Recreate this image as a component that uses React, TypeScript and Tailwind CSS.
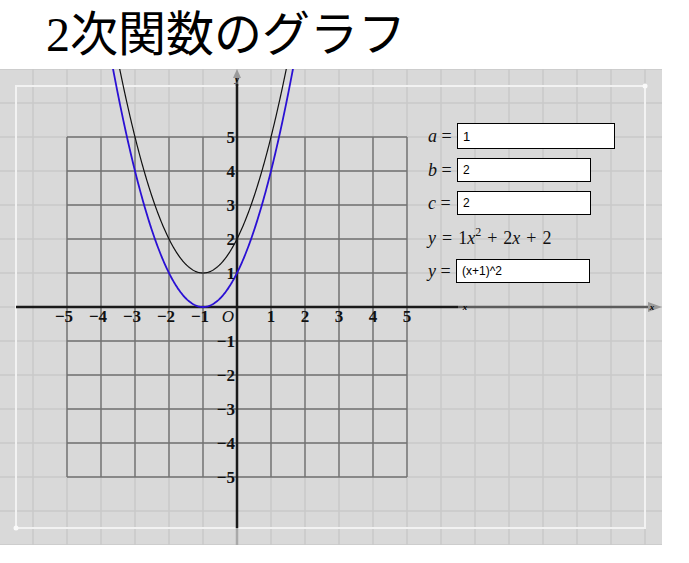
import React from "react";

const W = 662;
const H = 476;
const OX = 237;
const OY = 238;
const U = 34;

const px = (x: number) => OX + x * U;
const py = (y: number) => OY - y * U;

function curve(f: (x: number) => number): string {
  const pts: string[] = [];
  for (let x = -4.2; x <= 2.2; x += 0.02) {
    pts.push(`${px(x).toFixed(2)},${py(f(x)).toFixed(2)}`);
  }
  return "M" + pts.join(" L");
}

const serif = { fontFamily: '"Liberation Serif", "DejaVu Serif", serif' };

function Graph() {
  const lightV: number[] = [];
  for (let x = 33; x <= W; x += U) lightV.push(x);
  const lightH: number[] = [];
  for (let y = 0; y <= H; y += U) lightH.push(y);
  const ticks = [-5, -4, -3, -2, -1, 0, 1, 2, 3, 4, 5];

  return (
    <svg width={W} height={H} className="block">
      <defs>
        <clipPath id="cv">
          <rect x={0} y={0} width={W} height={H} />
        </clipPath>
      </defs>
      <rect x={0} y={0} width={W} height={H} fill="#d9d9d9" />
      {/* light grid */}
      {lightV.map((x) => (
        <line key={"lv" + x} x1={x} y1={0} x2={x} y2={H} stroke="#c9c9c9" strokeWidth={1.5} />
      ))}
      {lightH.map((y) => (
        <line key={"lh" + y} x1={0} y1={y} x2={W} y2={y} stroke="#c9c9c9" strokeWidth={1.5} />
      ))}
      {/* white frame */}
      <rect x={16} y={17} width={629} height={442} fill="none" stroke="#f2f2f2" strokeWidth={2} />
      <circle cx={645} cy={17} r={2.5} fill="#fafafa" />
      <circle cx={16} cy={459} r={2.5} fill="#fafafa" />
      {/* dark grid */}
      {ticks.map((t) => (
        <line key={"dv" + t} x1={px(t)} y1={py(5)} x2={px(t)} y2={py(-5)} stroke="#707070" strokeWidth={1.4} />
      ))}
      {ticks.map((t) => (
        <line key={"dh" + t} x1={px(-5)} y1={py(t)} x2={px(5)} y2={py(t)} stroke="#707070" strokeWidth={1.4} />
      ))}
      {/* axes, outer part */}
      <line x1={458} y1={OY} x2={650} y2={OY} stroke="#5c5c5c" strokeWidth={2.5} />
      <polygon points={`648,${OY - 5} 662,${OY} 648,${OY + 5}`} fill="#9a9a9a" />
      <text x={652} y={OY + 3} fontSize={9} fontStyle="italic" fontWeight={700} textAnchor="middle" style={serif}>
        x
      </text>
      <line x1={OX} y1={8} x2={OX} y2={17} stroke="#5c5c5c" strokeWidth={2.5} />
      <line x1={OX} y1={459} x2={OX} y2={H} stroke="#a9a9a9" strokeWidth={2.5} />
      <polygon points={`${OX - 4},9 ${OX},0 ${OX + 4},9`} fill="#9a9a9a" />
      <text x={OX} y={13} fontSize={9} fontStyle="italic" fontWeight={700} textAnchor="middle" style={serif}>
        y
      </text>
      {/* axes, main part */}
      <line x1={16} y1={OY} x2={458} y2={OY} stroke="#1a1a1a" strokeWidth={2.5} />
      <text x={465} y={OY + 3} fontSize={9} fontStyle="italic" fontWeight={700} textAnchor="middle" style={serif}>
        x
      </text>
      <line x1={OX} y1={15} x2={OX} y2={459} stroke="#1a1a1a" strokeWidth={2.5} />
      {/* curves */}
      <g clipPath="url(#cv)" fill="none">
        <path d={curve((x) => x * x + 2 * x + 2)} stroke="#111" strokeWidth={1.2} />
        <path d={curve((x) => (x + 1) * (x + 1))} stroke="#2a10d4" strokeWidth={1.8} />
      </g>
      {/* tick labels */}
      <g style={serif} fontSize={17} fill="#111" fontWeight={600}>
        {ticks
          .filter((t) => t !== 0)
          .map((t) => (
            <text key={"tx" + t} x={px(t) - (t < 0 ? 3 : 0)} y={OY + 15} textAnchor="middle">
              {t < 0 ? "−" + -t : String(t)}
            </text>
          ))}
        {ticks
          .filter((t) => t !== 0)
          .map((t) => (
            <text key={"ty" + t} x={OX - 2} y={py(t) + 6} textAnchor="end">
              {t < 0 ? "−" + -t : String(t)}
            </text>
          ))}
        <text x={228} y={OY + 15} textAnchor="middle" fontStyle="italic" fontWeight={400}>
          O
        </text>
      </g>
    </svg>
  );
}

function Field({ name, value, w, h, size, mt }: { name: string; value: string; w: string; h: string; size: string; mt: string }) {
  return (
    <div className={`flex items-center ${mt}`}>
      <span className="w-[29px] text-[18px] leading-none text-[#111]" style={serif}>
        <i>{name}</i> =
      </span>
      <input
        readOnly
        value={value}
        className={`${w} ${h} ${size} border border-black bg-white pl-[5px] outline-none font-['Liberation_Sans',Arial,sans-serif] text-black`}
      />
    </div>
  );
}

export default function App() {
  return (
    <div className="w-[689px] h-[563px] bg-white relative overflow-hidden">
      <div className="h-[69px] pl-[46px] pt-[9px]">
        <h1 className="text-[48px] leading-[52px] text-black font-normal font-['Liberation_Serif','Noto_Sans_CJK_JP',serif]">
          2次関数のグラフ
        </h1>
      </div>
      <div className="relative w-[662px] h-[476px]">
        <Graph />
        <div className="absolute left-[428px] top-[54px] flex flex-col">
          <Field name="a" value="1" w="w-[158px]" h="h-[26px]" size="text-[13px]" mt="mt-0" />
          <Field name="b" value="2" w="w-[134px]" h="h-[24px]" size="text-[12px]" mt="mt-[9px]" />
          <Field name="c" value="2" w="w-[134px]" h="h-[24px]" size="text-[12px]" mt="mt-[9px]" />
          <div className="mt-[10px] h-[26px] flex items-center text-[18px] text-[#111]" style={serif}>
            <i>y</i>
            <span className="mx-[6px]">=</span>
            <span>1</span>
            <i>x</i>
            <sup className="text-[12px] -top-[0.5em]">2</sup>
            <span className="mx-[6px]">+</span>
            <span>2</span>
            <i>x</i>
            <span className="mx-[6px]">+</span>
            <span>2</span>
          </div>
          <div className="mt-[8px] flex items-center">
            <span className="w-[28px] text-[18px] leading-none text-[#111]" style={serif}>
              <i>y</i> =
            </span>
            <input
              readOnly
              value="(x+1)^2"
              className="w-[134px] h-[24px] text-[12px] border border-black bg-white pl-[5px] outline-none font-['Liberation_Sans',Arial,sans-serif] text-black"
            />
          </div>
        </div>
      </div>
    </div>
  );
}
